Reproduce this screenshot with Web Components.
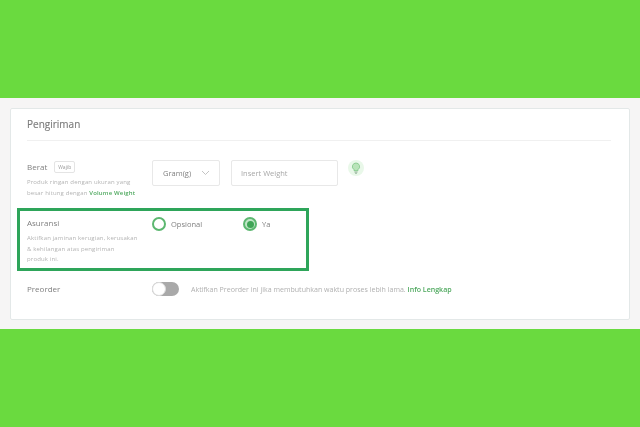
<!DOCTYPE html>
<html>
<head>
<meta charset="utf-8">
<title>Pengiriman</title>
<style>
  html, body { margin: 0; padding: 0; width: 640px; height: 427px; overflow: hidden; }
  body { font-family: "Open Sans", "Liberation Sans", sans-serif; }
  form-row b { font-weight: 600; color: #4fa95f; }
</style>
</head>
<body>
<shipping-page>
  <form-row label="Berat" tag="Wajib" style="height: 48px">
    <span slot="help">Produk ringan dengan ukuran yang<br>besar hitung dengan <b>Volume Weight</b></span>
    <weight-input></weight-input>
  </form-row>
  <form-row label="Asuransi" highlight style="height: 63px">
    <span slot="help">Aktifkan jaminan kerugian, kerusakan<br>&amp; kehilangan atas pengiriman<br>produk ini.</span>
    <radio-option label="Opsional"></radio-option>
    <radio-option label="Ya" checked></radio-option>
  </form-row>
  <form-row label="Preorder">
    <preorder-switch></preorder-switch>
  </form-row>
</shipping-page>

<script>
  class ShippingPage extends HTMLElement {
    constructor() {
      super();
      this.attachShadow( {mode: 'open'} );
      this.shadowRoot.innerHTML = /* template */ `
        <style>
          :host {
            display: flex;
            flex-direction: column;
            height: 427px;
            background: #6ada3f;
          }

          main {
            box-sizing: border-box;
            display: flex;
            height: 231px;
            margin-top: 98px;
            padding: 10px 10px 9px 10px;
            background: #f6f5f5;
          }

          section {
            box-sizing: border-box;
            flex: 1;
            padding: 0 18px 0 6px;
            background: #ffffff;
            border: 1px solid #e3e8e8;
            border-radius: 2px;
            filter: blur( 0.35px );
          }

          h2 {
            margin: 0 0 19px 10px;
            height: 31px;
            line-height: 31px;
            font-size: 10px;
            font-weight: 400;
            -webkit-text-stroke: 0.15px #7c7c7c;
            color: #7c7c7c;
            border-bottom: 1px solid #f0f0f0;
          }
        </style>
        <main>
          <section>
            <h2>Pengiriman</h2>
            <slot></slot>
          </section>
        </main>
      `;
    }
  }

  class FormRow extends HTMLElement {
    constructor() {
      super();
      this.attachShadow( {mode: 'open'} );
      this.shadowRoot.innerHTML = /* template */ `
        <style>
          :host {
            box-sizing: border-box;
            display: grid;
            grid-template-columns: 125px 1fr;
            padding: 0 0 0 10px;
          }

          :host( [highlight] ) {
            width: 292px;
            margin: 0 0 11px 0;
            padding: 5px 0 0 7px;
            border: 3px solid #2ea55a;
          }

          :host( [highlight] ) .fields {
            padding-top: 1px;
          }

          .head {
            display: flex;
            align-items: center;
            gap: 7px;
            height: 13px;
            font-size: 8px;
            color: #808080;
          }

          .tag {
            padding: 0 3px;
            height: 12px;
            line-height: 10px;
            box-sizing: border-box;
            font-size: 5px;
            color: #9a9a9a;
            border: 1px solid #e4e4e4;
            border-radius: 2px;
          }

          .tag:empty {
            display: none;
          }

          .help {
            margin-top: 4px;
            font-size: 6px;
            line-height: 10.5px;
            letter-spacing: 0.15px;
            color: #b4b4b4;
            white-space: nowrap;
          }

          ::slotted( span ) {
            display: block;
          }

          .fields {
            display: flex;
            align-items: flex-start;
          }
        </style>
        <div>
          <div class="head"><span class="name"></span><span class="tag"></span></div>
          <div class="help"><slot name="help"></slot></div>
        </div>
        <div class="fields"><slot></slot></div>
      `;
      this.shadowRoot.querySelector( '.name' ).textContent = this.getAttribute( 'label' );
      this.shadowRoot.querySelector( '.tag' ).textContent = this.getAttribute( 'tag' ) || '';
    }
  }

  class WeightInput extends HTMLElement {
    constructor() {
      super();
      this.attachShadow( {mode: 'open'} );
      this.shadowRoot.innerHTML = /* template */ `
        <style>
          :host {
            display: flex;
            align-items: flex-start;
            font-size: 7.5px;
            color: #808080;
          }

          .box {
            box-sizing: border-box;
            display: flex;
            align-items: center;
            height: 26px;
            padding: 0 9px;
            background: #ffffff;
            border: 1px solid #e8e8e8;
            border-radius: 2px;
          }

          .select {
            justify-content: space-between;
            width: 68px;
            margin-right: 11px;
            padding-left: 10px;
          }

          .text {
            width: 107px;
            margin-right: 10px;
            color: #a8a8a8;
          }

          .hint {
            display: flex;
            align-items: center;
            justify-content: center;
            width: 16px;
            height: 16px;
            background: #e9f8e9;
            border-radius: 50%;
          }
        </style>
        <div class="box select">
          <span>Gram(g)</span>
          <svg width="9" height="6" viewBox="0 0 9 6"><path d="M1 1 L4.5 4.5 L8 1" fill="none" stroke="#b5b5b5" stroke-width="0.8"/></svg>
        </div>
        <div class="box text">Insert Weight</div>
        <div class="hint">
          <svg width="10" height="12" viewBox="0 0 10 12">
            <path d="M5 1 a3.6 3.6 0 0 1 2 6.6 V8.6 H3 V7.6 A3.6 3.6 0 0 1 5 1 Z" fill="#b9e4b9" stroke="#7cc584" stroke-width="0.8"/>
            <path d="M3.4 10 H6.6 M4 11.2 H6" stroke="#8aa890" stroke-width="0.9"/>
          </svg>
        </div>
      `;
    }
  }

  class RadioOption extends HTMLElement {
    constructor() {
      super();
      this.attachShadow( {mode: 'open'} );
      this.shadowRoot.innerHTML = /* template */ `
        <style>
          :host {
            display: flex;
            align-items: center;
            gap: 5px;
            width: 91px;
            height: 14px;
            font-size: 7.5px;
            color: #808080;
          }

          i {
            box-sizing: border-box;
            display: flex;
            align-items: center;
            justify-content: center;
            flex: none;
            width: 14px;
            height: 14px;
            border: 2px solid #5cb770;
            border-radius: 50%;
          }

          :host( [checked] ) i {
            background: #bfe6c6;
          }

          :host( [checked] ) i::after {
            content: '';
            width: 7px;
            height: 7px;
            background: #3fa556;
            border-radius: 50%;
          }
        </style>
        <i></i><span></span>
      `;
      this.shadowRoot.querySelector( 'span' ).textContent = this.getAttribute( 'label' );
    }
  }

  class PreorderSwitch extends HTMLElement {
    constructor() {
      super();
      this.attachShadow( {mode: 'open'} );
      this.shadowRoot.innerHTML = /* template */ `
        <style>
          :host {
            display: flex;
            align-items: center;
            gap: 12px;
            font-size: 7.05px;
            color: #b0b0b0;
            white-space: nowrap;
          }

          .track {
            display: flex;
            width: 27px;
            height: 14px;
            background: #a9a9a9;
            border-radius: 7px;
          }

          .knob {
            box-sizing: border-box;
            width: 14px;
            height: 14px;
            background: #ffffff;
            border: 1px solid #dcdcdc;
            border-radius: 50%;
          }

          b {
            font-weight: 600;
            color: #4fa95f;
          }
        </style>
        <div class="track"><div class="knob"></div></div>
        <span>Aktifkan Preorder ini jika membutuhkan waktu proses lebih lama. <b>Info Lengkap</b></span>
      `;
    }
  }

  window.customElements.define( 'shipping-page', ShippingPage );
  window.customElements.define( 'form-row', FormRow );
  window.customElements.define( 'weight-input', WeightInput );
  window.customElements.define( 'radio-option', RadioOption );
  window.customElements.define( 'preorder-switch', PreorderSwitch );
</script>
</body>
</html>
